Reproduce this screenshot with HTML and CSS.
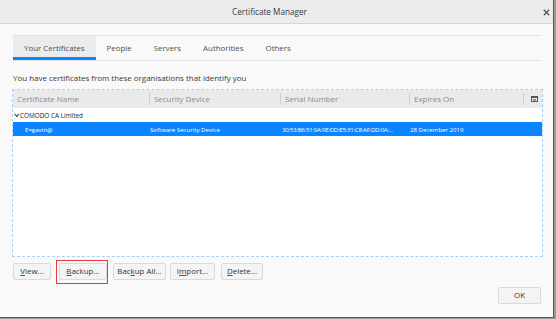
FILE: index.html
```html
<!DOCTYPE html>
<html>
<head>
<meta charset="utf-8">
<link rel="stylesheet" href="styles.css">
</head>
<body>
<div class="window">
  <div class="titlebar">
    <span class="title">Certificate Manager</span>
    <svg class="close" width="7" height="7" viewBox="0 0 7 7"><path d="M0.8 0.8 L6.2 6.2 M6.2 0.8 L0.8 6.2" stroke="#555" stroke-width="1.3"/></svg>
  </div>
  <div class="content">
    <div class="tabs">
      <div class="tab active">Your Certificates</div>
      <div class="tab">People</div>
      <div class="tab">Servers</div>
      <div class="tab">Authorities</div>
      <div class="tab">Others</div>
    </div>
    <p class="desc">You have certificates from these organisations that identify you</p>
    <div class="tree">
      <div class="thead">
        <div class="col c1">Certificate Name</div>
        <div class="col c2">Security Device</div>
        <div class="col c3">Serial Number</div>
        <div class="col c4">Expires On</div>
        <div class="col c5">
          <svg width="7" height="6" viewBox="0 0 7 6"><rect x="0.5" y="0.5" width="6" height="5" fill="none" stroke="#555"/><rect x="0.5" y="0.5" width="6" height="1.5" fill="#555"/><rect x="2" y="3" width="3" height="1.5" fill="#777"/></svg>
        </div>
      </div>
      <div class="group"><span class="chev"></span>COMODO CA Limited</div>
      <div class="row selected">
        <div class="cell c1">E=gavin@</div>
        <div class="cell c2">Software Security Device</div>
        <div class="cell c3">30:53:B6:51:9A:9E:DD:E5:31:C8:AF:DD:0A:...</div>
        <div class="cell c4">28 December 2019</div>
      </div>
    </div>
    <div class="actions">
      <button class="btn b-view"><u>V</u>iew...</button>
      <span class="highlight"><button class="btn b-backup"><u>B</u>ackup...</button></span>
      <button class="btn b-all">Bac<u>k</u>up All...</button>
      <button class="btn b-import">I<u>m</u>port...</button>
      <button class="btn b-delete"><u>D</u>elete...</button>
    </div>
    <div class="footer">
      <button class="btn ok">OK</button>
    </div>
  </div>
</div>
</body>
</html>
```

FILE: styles.css
```css
* { box-sizing: border-box; }
html, body {
  margin: 0;
  padding: 0;
  width: 556px;
  height: 319px;
  overflow: hidden;
  background: #9a9a9a;
  font-family: "Open Sans", "Noto Sans", sans-serif;
}
.window {
  width: 554px;
  height: 318px;
  background: #f9f9f9;
  border-right: 1px solid #5a5a5a;
  border-bottom: 1px solid #5a5a5a;
  display: flex;
  flex-direction: column;
}
.titlebar {
  height: 24px;
  background: #ececec;
  border-bottom: 1px solid #d4d4d4;
  display: flex;
  align-items: center;
  justify-content: center;
  padding-right: 14px;
  position: relative;
  flex: none;
}
.title {
  font-size: 8.2px;
  color: #3a3a3a;
}
.close {
  position: absolute;
  right: 3px;
  top: 9px;
}
.content {
  padding: 11px 12px 0 13px;
  flex: 1;
  display: flex;
  flex-direction: column;
}
.tabs {
  height: 26px;
  border-top: 1px solid #e3e3e3;
  border-bottom: 1px solid #e3e3e3;
  display: flex;
}
.tab {
  padding: 0 11px;
  font-size: 7.9px;
  color: #505050;
  display: flex;
  align-items: center;
  height: 24px;
}
.tab.active {
  background: #ebebeb;
  border-bottom: 3px solid #0a84ff;
  padding-top: 3px;
}
.desc {
  margin: 11px 0 0 0;
  font-size: 7.95px;
  color: #3a3a3a;
  line-height: 13px;
}
.tree {
  margin: 4px -2px 0 -1px;
  height: 168px;
  border: 1px dashed #a9cdf5;
  background: #ffffff;
}
.thead {
  height: 18px;
  background: #eaeaea;
  display: flex;
  align-items: center;
}
.col {
  font-size: 7.95px;
  color: #8c8c8c;
  height: 12px;
  line-height: 12px;
  padding-left: 4px;
  border-right: 1px solid #cfcfcf;
  white-space: nowrap;
}
.c1 { width: 137px; }
.c2 { width: 131px; }
.c3 { width: 129px; }
.c4 { width: 114px; }
.c5 { flex: 1; border-right: none; padding-left: 7px; display: flex; align-items: center; }
.group {
  height: 14px;
  font-size: 6.4px;
  color: #1a1a1a;
  display: flex;
  align-items: center;
  padding-left: 1px;
}
.chev {
  width: 3.5px;
  height: 3.5px;
  border-right: 1px solid #333;
  border-bottom: 1px solid #333;
  transform: rotate(45deg);
  margin: 0 1.5px 2px 1px;
}
.row {
  height: 14px;
  display: flex;
  align-items: center;
}
.row.selected {
  background: #0a84ff;
  color: #ffffff;
}
.cell {
  font-size: 6.1px;
  white-space: nowrap;
}
.row .c1 { width: 137px; padding-left: 12px; }
.row .c2 { width: 132px; }
.row .c3 { width: 128px; letter-spacing: -0.25px; }
.row .c4 { width: 114px; }
.actions {
  margin-top: 6px;
  display: flex;
  align-items: flex-start;
  gap: 5px;
}
.highlight {
  border: 1px solid #e53935;
  padding: 2px 0 3px 2px;
  margin: -3px 0 -4px 0;
  display: flex;
}
.btn {
  height: 17px;
  padding: 0;
  font-family: "Open Sans", "Noto Sans", sans-serif;
  font-size: 7.9px;
  color: #333;
  background: #f4f4f4;
  border: 1px solid #dadada;
  border-radius: 2px;
  line-height: 15px;
  text-align: center;
}
.btn u { text-decoration-color: #555; }
.b-view { width: 38px; }
.b-backup { width: 48px; }
.b-all { width: 53px; }
.b-import { width: 45px; margin-left: -1px; }
.b-delete { width: 42px; margin-left: 1px; }
.footer {
  display: flex;
  justify-content: flex-end;
  margin-top: 7px;
}
.ok {
  width: 43px;
  height: 17px;
}
```
